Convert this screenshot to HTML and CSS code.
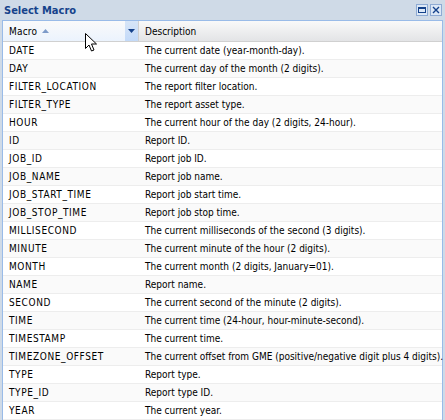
FILE: index.html
```html
<!DOCTYPE html>
<html>
<head>
<meta charset="utf-8">
<link rel="stylesheet" href="styles.css">
</head>
<body>
<div class="win">
  <div class="titlebar">
    <span class="title">Select Macro</span>
    <div class="tools">
      <span class="tool"><svg width="12" height="12" viewBox="0 0 12 12"><rect x="2.5" y="3.5" width="7" height="5" fill="none" stroke="#15428b" stroke-width="1"/><rect x="2.5" y="3.5" width="7" height="1.5" fill="#15428b"/></svg></span>
      <span class="tool"><svg width="12" height="12" viewBox="0 0 12 12"><path d="M3 3 L9 9 M9 3 L3 9" stroke="#15428b" stroke-width="1.4"/></svg></span>
    </div>
  </div>
  <div class="body">
    <div class="grid">
      <div class="hdr">
        <div class="hc c1 active"><span class="lbl">Macro</span><svg class="sort" width="7" height="4" viewBox="0 0 7 4"><path d="M0 4H7L3.5 0Z" fill="#7d9bc9"/></svg><span class="trig"><svg width="7" height="4" viewBox="0 0 7 4"><path d="M0 0H7L3.5 4Z" fill="#15428b"/></svg></span></div>
        <div class="hc c2"><span>Description</span></div>
      </div>
      <div class="rows">
        <div class="row"><div class="c1">DATE</div><div class="c2">The current date (year-month-day).</div></div>
        <div class="row alt"><div class="c1">DAY</div><div class="c2">The current day of the month (2 digits).</div></div>
        <div class="row"><div class="c1">FILTER_LOCATION</div><div class="c2">The report filter location.</div></div>
        <div class="row alt"><div class="c1">FILTER_TYPE</div><div class="c2">The report asset type.</div></div>
        <div class="row"><div class="c1">HOUR</div><div class="c2">The current hour of the day (2 digits, 24-hour).</div></div>
        <div class="row alt"><div class="c1">ID</div><div class="c2">Report ID.</div></div>
        <div class="row"><div class="c1">JOB_ID</div><div class="c2">Report job ID.</div></div>
        <div class="row alt"><div class="c1">JOB_NAME</div><div class="c2">Report job name.</div></div>
        <div class="row"><div class="c1">JOB_START_TIME</div><div class="c2">Report job start time.</div></div>
        <div class="row alt"><div class="c1">JOB_STOP_TIME</div><div class="c2">Report job stop time.</div></div>
        <div class="row"><div class="c1">MILLISECOND</div><div class="c2">The current milliseconds of the second (3 digits).</div></div>
        <div class="row alt"><div class="c1">MINUTE</div><div class="c2">The current minute of the hour (2 digits).</div></div>
        <div class="row"><div class="c1">MONTH</div><div class="c2">The current month (2 digits, January=01).</div></div>
        <div class="row alt"><div class="c1">NAME</div><div class="c2">Report name.</div></div>
        <div class="row"><div class="c1">SECOND</div><div class="c2">The current second of the minute (2 digits).</div></div>
        <div class="row alt"><div class="c1">TIME</div><div class="c2">The current time (24-hour, hour-minute-second).</div></div>
        <div class="row"><div class="c1">TIMESTAMP</div><div class="c2">The current time.</div></div>
        <div class="row alt"><div class="c1">TIMEZONE_OFFSET</div><div class="c2">The current offset from GME (positive/negative digit plus 4 digits).</div></div>
        <div class="row"><div class="c1">TYPE</div><div class="c2">Report type.</div></div>
        <div class="row alt"><div class="c1">TYPE_ID</div><div class="c2">Report type ID.</div></div>
        <div class="row"><div class="c1">YEAR</div><div class="c2">The current year.</div></div>
      </div>
    </div>
    <svg class="cursor" width="14" height="20" viewBox="0 0 14 20"><path d="M0.5 0.5 L0.5 15.5 L4 12 L6.5 18 L9 17 L6.5 11 L11.5 11 Z" fill="#fff" stroke="#000" stroke-width="1"/></svg>
  </div>
</div>
</body>
</html>
```
FILE: styles.css
```css
html, body { margin: 0; padding: 0; background: #fff; }
body { font-family: "DejaVu Sans Condensed", "DejaVu Sans", sans-serif; font-size: 10px; color: #000; }
.win { width: 445px; height: 420px; background: #cfdae7; padding: 0 2px 0 2px; box-sizing: border-box; display: flex; flex-direction: column; overflow: hidden; }
.titlebar { height: 20px; display: flex; align-items: center; justify-content: space-between; padding-left: 2px; flex: none; }
.title { font-weight: bold; font-size: 11px; color: #15428b; }
.tools { display: flex; gap: 2px; margin-right: 1px; }
.tool { width: 12px; height: 12px; background: #dde8f6; border: 1px solid #8eaad3; box-sizing: border-box; display: flex; }
.tool svg { margin: -1px; }
.body { flex: 1; background: #fff; border: 1px solid #99bbe8; border-bottom: none; position: relative; }
.grid { display: flex; flex-direction: column; }
.hdr { display: flex; height: 20px; background: linear-gradient(#f9f9f9, #e3e4e6); border-bottom: 1px solid #d0d0d0; }
.hc { display: flex; align-items: center; padding-left: 6px; box-sizing: border-box; border-right: 1px solid #d0d0d0; }
.hc.c1 { width: 136px; }
.hc.c1.active { background: linear-gradient(#fafafa, #ebf3fd); padding-right: 0; }
.hc.c2 { flex: 1; border-right: none; }
.hc .lbl { letter-spacing: 0.2px; }
.sort { margin-left: 5px; margin-top: -1px; }
.trig { margin-left: auto; width: 13px; align-self: stretch; background: linear-gradient(#d7e5f7, #c3daf9); display: flex; align-items: center; justify-content: center; }
.row { display: flex; height: 18px; border-bottom: 1px solid #ededed; box-sizing: border-box; align-items: center; }
.row.alt { background: #fafafa; }
.row .c1 { width: 136px; padding-left: 6px; box-sizing: border-box; flex: none; letter-spacing: 0.6px; }
.row .c2 { padding-left: 6px; white-space: nowrap; }
.cursor { position: absolute; left: 82px; top: 12px; }
```
